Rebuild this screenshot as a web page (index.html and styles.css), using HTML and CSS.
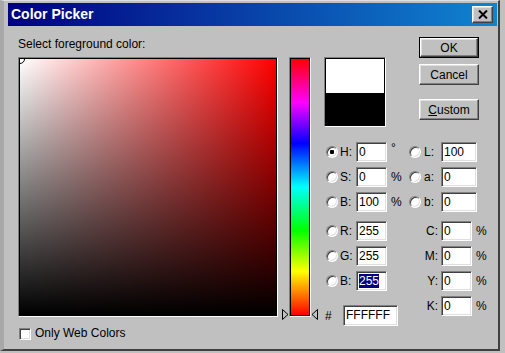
FILE: index.html
```html
<!DOCTYPE html>
<html lang="en">

<head>
    <meta charset="UTF-8">
    <title>Color Picker</title>
    <link rel="stylesheet" href="styles.css">
</head>

<body>
    <!--창 전체-->
    <div class="window">
        <!--타이틀바-->
        <div class="titlebar">
            <span class="title">Color Picker</span>
            <span class="close">
                <svg width="10" height="9" viewBox="0 0 10 9">
                    <path d="M1 0.5 L9 8.5 M9 0.5 L1 8.5" stroke="#000" stroke-width="2" fill="none" />
                </svg>
            </span>
        </div>

        <!--대화상자 본문-->
        <div class="dialog">
            <!--색상필드-->
            <div class="pick-col">
                <div class="caption">Select foreground color:</div>
                <div class="sunken field-frame">
                    <div class="field"><span class="marker"></span></div>
                </div>
                <div class="webonly">
                    <span class="checkbox"></span>
                    <span>Only Web Colors</span>
                </div>
            </div>

            <!--색조 슬라이더-->
            <div class="hue-col">
                <div class="sunken hue-frame">
                    <div class="hue"></div>
                </div>
                <svg class="arrow arrow-left" width="7" height="11" viewBox="0 0 7 11">
                    <path d="M0.5 0.5 L6 5.5 L0.5 10.5 Z" fill="#c0c0c0" stroke="#000" stroke-width="1" />
                </svg>
                <svg class="arrow arrow-right" width="7" height="11" viewBox="0 0 7 11">
                    <path d="M6.5 0.5 L1 5.5 L6.5 10.5 Z" fill="#c0c0c0" stroke="#000" stroke-width="1" />
                </svg>
            </div>

            <!--오른쪽 영역-->
            <div class="side-col">
                <div class="side-top">
                    <div class="sunken swatch-frame">
                        <div class="swatch">
                            <div class="swatch-new"></div>
                            <div class="swatch-old"></div>
                        </div>
                    </div>
                    <div class="buttons">
                        <div class="btn-default"><span class="btn">OK</span></div>
                        <span class="btn">Cancel</span>
                        <span class="btn btn-custom"><u>C</u>ustom</span>
                    </div>
                </div>

                <!--HSB / Lab-->
                <div class="fields fields-hsb">
                    <span class="radio on"></span>
                    <span class="lbl">H:</span>
                    <span class="box">0</span>
                    <span class="unit deg">°</span>
                    <span class="radio"></span>
                    <span class="lbl">L:</span>
                    <span class="box">100</span>

                    <span class="radio"></span>
                    <span class="lbl">S:</span>
                    <span class="box">0</span>
                    <span class="unit">%</span>
                    <span class="radio"></span>
                    <span class="lbl">a:</span>
                    <span class="box">0</span>

                    <span class="radio"></span>
                    <span class="lbl">B:</span>
                    <span class="box">100</span>
                    <span class="unit">%</span>
                    <span class="radio"></span>
                    <span class="lbl">b:</span>
                    <span class="box">0</span>
                </div>

                <!--RGB / CMYK-->
                <div class="fields fields-rgb">
                    <span class="radio"></span>
                    <span class="lbl">R:</span>
                    <span class="box">255</span>
                    <span></span>
                    <span class="lbl-r">C:</span>
                    <span class="box">0</span>
                    <span class="unit">%</span>

                    <span class="radio"></span>
                    <span class="lbl">G:</span>
                    <span class="box">255</span>
                    <span></span>
                    <span class="lbl-r">M:</span>
                    <span class="box">0</span>
                    <span class="unit">%</span>

                    <span class="radio"></span>
                    <span class="lbl">B:</span>
                    <span class="box"><span class="sel">255</span></span>
                    <span></span>
                    <span class="lbl-r">Y:</span>
                    <span class="box">0</span>
                    <span class="unit">%</span>

                    <div class="hex-row">
                        <span class="hash">#</span>
                        <span class="box hex">FFFFFF</span>
                    </div>
                    <span class="lbl-r">K:</span>
                    <span class="box">0</span>
                    <span class="unit">%</span>
                </div>
            </div>
        </div>
    </div>
</body>

</html>
```

FILE: styles.css
```css
html,
body {
    margin: 0;
    padding: 0;
}

body {
    background: #c0c0c0;
    color: #000;
    font: 12px/14px "Liberation Sans", Arial, sans-serif;
}

/*창 테두리*/
.window {
    width: 500px;
    height: 351px;
    box-sizing: border-box;
    padding: 2px 1px 0 4px;
    border-top: 1px solid #dfdfdf;
    border-left: 4px solid #a8a8a8;
    border-right: 2px solid #404040;
    border-bottom: 2px solid #404040;
    background: #c0c0c0;
}

/*타이틀바*/
.titlebar {
    display: flex;
    align-items: center;
    justify-content: space-between;
    height: 23px;
    padding: 0 4px 0 3px;
    background: linear-gradient(to right, #000080, #1084d0);
    color: #fff;
    font: bold 14px/23px "Liberation Sans", Arial, sans-serif;
}

.close {
    display: flex;
    align-items: center;
    justify-content: center;
    width: 21px;
    height: 17px;
    box-sizing: border-box;
    background: #c0c0c0;
    border: 1px solid;
    border-color: #fff #404040 #404040 #fff;
    box-shadow: inset -1px -1px #808080, inset 1px 1px #dfdfdf;
}

/*본문*/
.dialog {
    display: flex;
    padding: 11px 0 0 10px;
}

/*움푹 들어간 테두리*/
.sunken {
    border: 1px solid;
    border-color: #808080 #fff #fff #808080;
}

/*색상필드*/
.pick-col {
    display: flex;
    flex-direction: column;
}

.caption {
    height: 14px;
    margin-bottom: 6px;
}

.field {
    position: relative;
    width: 256px;
    height: 256px;
    overflow: hidden;
    border: 1px solid #000;
    background:
        linear-gradient(to top, #000, rgba(0, 0, 0, 0)),
        linear-gradient(to right, #fff, #f00);
}

.marker {
    position: absolute;
    left: -5px;
    top: -5px;
    width: 8px;
    height: 8px;
    border: 1px solid #000;
    border-radius: 50%;
    box-shadow: inset 0 0 0 1px #fff;
}

.webonly {
    display: flex;
    align-items: center;
    gap: 4px;
    margin-top: 10px;
    padding-left: 1px;
    line-height: 13px;
}

.checkbox {
    width: 12px;
    height: 12px;
    box-sizing: border-box;
    background: #fff;
    border: 1px solid;
    border-color: #808080 #fff #fff #808080;
    box-shadow: inset 1px 1px #404040, inset -1px -1px #dfdfdf;
}

/*색조 슬라이더*/
.hue-col {
    position: relative;
    width: 36px;
    margin-left: 4px;
    padding-top: 20px;
}

.hue-frame {
    width: 20px;
    margin: 0 auto;
}

.hue {
    width: 18px;
    height: 256px;
    border: 1px solid #000;
    background: linear-gradient(to bottom, #f00, #f0f 17%, #00f 33%, #0ff 50%, #0f0 67%, #ff0 83%, #f00);
}

.arrow {
    position: absolute;
    top: 272px;
}

.arrow-left {
    left: 0;
}

.arrow-right {
    right: 0;
}

/*오른쪽 영역*/
.side-col {
    width: 155px;
    margin-left: 6px;
}

.side-top {
    display: flex;
    justify-content: space-between;
    height: 90px;
}

.swatch-frame {
    align-self: flex-start;
    margin-top: 20px;
}

.swatch {
    width: 58px;
    border: 1px solid #000;
}

.swatch-new {
    height: 34px;
    background: #fff;
}

.swatch-old {
    height: 32px;
    background: #000;
}

/*버튼*/
.buttons {
    display: flex;
    flex-direction: column;
    width: 60px;
}

.btn {
    display: flex;
    align-items: center;
    justify-content: center;
    height: 21px;
    box-sizing: border-box;
    background: #c0c0c0;
    border: 1px solid;
    border-color: #fff #404040 #404040 #fff;
    box-shadow: inset -1px -1px #808080, inset 1px 1px #dfdfdf;
    margin-top: 6px;
}

.btn-default {
    height: 21px;
    box-sizing: border-box;
    border: 1px solid #000;
}

.btn-default .btn {
    height: 19px;
    margin-top: 0;
}

.btn-custom {
    margin-top: 14px;
}

.btn u {
    text-decoration: underline;
}

/*입력칸 그리드*/
.fields {
    display: grid;
    grid-auto-rows: 20px;
    row-gap: 5px;
    align-items: center;
    padding-left: 2px;
}

.fields-hsb {
    grid-template-columns: 12px 18px 31px 22px 13px 19px 36px;
    margin-top: 15px;
}

.fields-rgb {
    grid-template-columns: 12px 18px 31px 22px 32px 31px 16px;
    margin-top: 9px;
}

.radio {
    width: 12px;
    height: 12px;
    box-sizing: border-box;
    border: 1px solid;
    border-color: #808080 #fff #fff #808080;
    border-radius: 50%;
    background: #fff;
    box-shadow: inset 1px 1px #404040, inset -1px -1px #dfdfdf;
}

.radio.on {
    background: radial-gradient(circle, #000 0, #000 2px, #fff 2.5px);
}

.lbl {
    padding-left: 2px;
}

.lbl-r {
    padding-right: 3px;
    text-align: right;
}

.box {
    height: 20px;
    box-sizing: border-box;
    padding-left: 2px;
    background: #fff;
    border: 1px solid;
    border-color: #808080 #fff #fff #808080;
    box-shadow: inset 1px 1px #404040, inset -1px -1px #dfdfdf;
    line-height: 18px;
}

.sel {
    background: #000080;
    color: #fff;
}

.unit {
    padding-left: 4px;
}

.deg {
    align-self: start;
    line-height: 12px;
}

/*16진수 칸*/
.hex-row {
    display: flex;
    align-items: center;
    grid-column: 1 / 5;
    align-self: start;
    margin: 9px 0 0 -2px;
}

.hash {
    width: 19px;
    padding-left: 1px;
    box-sizing: border-box;
}

.hex {
    width: 55px;
    height: 21px;
    line-height: 19px;
}
```
